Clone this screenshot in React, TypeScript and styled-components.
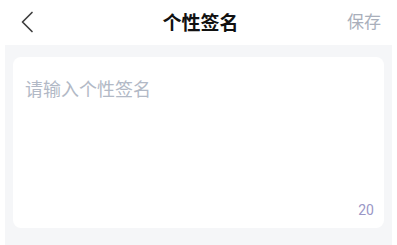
import React from "react";
import styled, {createGlobalStyle} from "styled-components";

const GlobalStyle = createGlobalStyle`
  html, body {
    margin: 0;
    padding: 0;
    background: #ffffff;
    font-family: "Noto Sans CJK SC", "Noto Sans", sans-serif;
  }
`

export const Page = styled.div`
  width: 397px;
  height: 245px;
  display: flex;
  flex-direction: column;
  background: #ffffff;
  overflow: hidden;
`

export const Header = styled.header`
  height: 45px;
  display: grid;
  grid-template-columns: 80px 1fr 80px;
  align-items: center;
  padding: 0 16px 0 20px;
  box-sizing: border-box;
`

export const BackButton = styled.button`
  border: none;
  background: none;
  padding: 0;
  width: 20px;
  height: 24px;
  display: flex;
  align-items: center;
  margin-top: -2px;
`

export const Title = styled.h1`
  margin: 0;
  text-align: center;
  font-size: 19px;
  font-weight: 700;
  color: #111111;
  margin-top: -3px;
`

export const SaveButton = styled.button`
  justify-self: end;
  border: none;
  background: none;
  padding: 0;
  font-family: inherit;
  font-size: 17px;
  color: #a9afbb;
  margin-top: -4px;
`

export const Body = styled.main`
  flex: 1;
  margin: 0 5px;
  background: #f5f6f8;
  padding: 12px 8px 17px;
  box-sizing: border-box;
  display: flex;
`

export const Card = styled.div`
  flex: 1;
  background: #ffffff;
  border-radius: 8px;
  padding: 18px 12px 10px;
  display: flex;
  flex-direction: column;
`

export const Input = styled.textarea`
  flex: 1;
  border: none;
  outline: none;
  resize: none;
  padding: 0;
  font-family: inherit;
  font-size: 18px;
  line-height: 26px;
  color: #333;

  &::placeholder {
    color: #b2b9c6;
  }
`

export const Counter = styled.div`
  align-self: flex-end;
  font-family: Roboto, "Noto Sans", sans-serif;
  font-size: 14px;
  color: #9a97c6;
  margin-right: -2px;
`

const App = () => {
    return (
        <Page>
            <GlobalStyle/>
            <Header>
                <BackButton>
                    <svg width="14" height="22" viewBox="0 0 14 22" fill="none">
                        <path d="M12 1.5 L2.5 11 L12 20.5" stroke="#404040" strokeWidth="1.7" strokeLinecap="round" strokeLinejoin="round"/>
                    </svg>
                </BackButton>
                <Title>个性签名</Title>
                <SaveButton>保存</SaveButton>
            </Header>
            <Body>
                <Card>
                    <Input placeholder="请输入个性签名"/>
                    <Counter>20</Counter>
                </Card>
            </Body>
        </Page>
    );
};

export default App;
